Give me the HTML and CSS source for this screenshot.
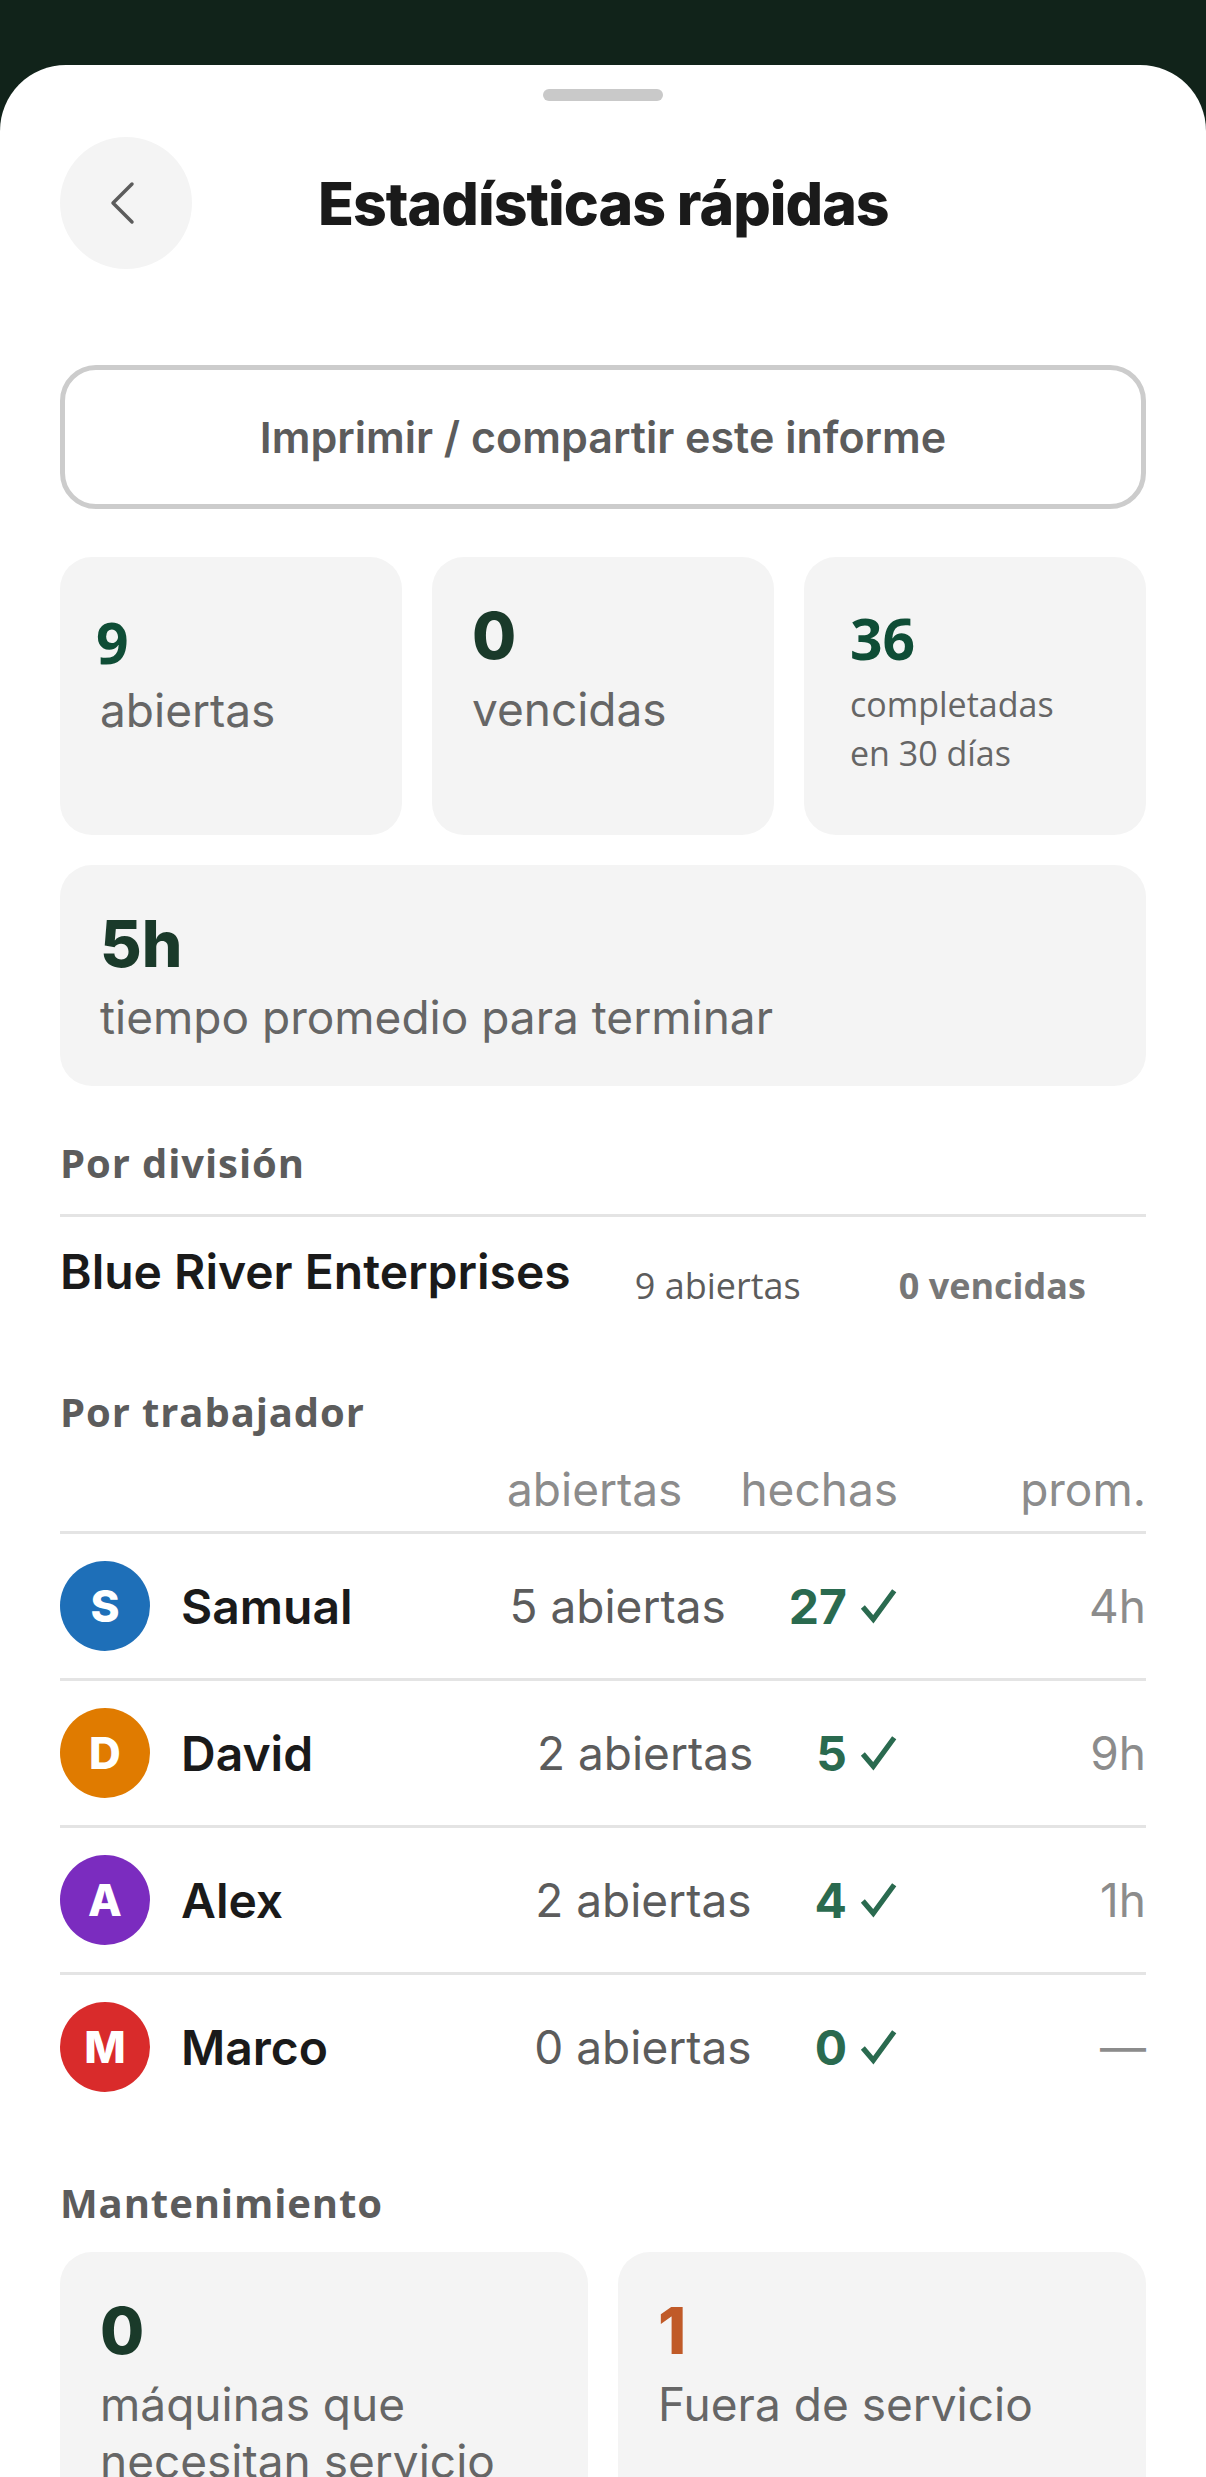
FILE: index.html
```html
<!DOCTYPE html>
<html>
<head>
    <title>Estadísticas rápidas</title>
    <link rel="stylesheet" href="styles.css">
</head>
<body>
    <div class="sheet">
        <div class="handle"></div>
        <div class="header">
            <button class="back" aria-label="Volver">
                <svg width="32" height="48" viewBox="0 0 32 48"><path d="M24 5 L5 24 L24 43" fill="none" stroke="#5c5c5c" stroke-width="3.5" stroke-linecap="round" stroke-linejoin="round"/></svg>
            </button>
            <h1>Estadísticas rápidas</h1>
        </div>

        <button class="print">Imprimir / compartir este informe</button>

        <div class="stats">
            <div class="card open-card">
                <div class="num-alt">9</div>
                <div class="label">abiertas</div>
            </div>
            <div class="card">
                <div class="num">0</div>
                <div class="label">vencidas</div>
            </div>
            <div class="card third">
                <div class="num-alt">36</div>
                <div class="label-small">completadas<br>en 30 días</div>
            </div>
        </div>

        <div class="card wide">
            <div class="num">5h</div>
            <div class="label">tiempo promedio para terminar</div>
        </div>

        <h2 class="section first">Por división</h2>
        <div class="division">
            <span class="division-name">Blue River Enterprises</span>
            <span class="division-open">9 abiertas</span>
            <span class="division-late">0 vencidas</span>
        </div>

        <h2 class="section workers-title">Por trabajador</h2>
        <div class="worker-head">
            <span class="head-open">abiertas</span>
            <span class="head-done">hechas</span>
            <span class="prom">prom.</span>
        </div>

        <div class="worker">
            <span class="avatar blue">S</span>
            <span class="name">Samual</span>
            <span class="open">5 abiertas</span>
            <span class="done">27 <svg viewBox="0 0 40 40"><path d="M3 21 L14 34 L36 4" fill="none" stroke="currentColor" stroke-width="5.5"/></svg></span>
            <span class="prom">4h</span>
        </div>
        <div class="worker">
            <span class="avatar orange">D</span>
            <span class="name">David</span>
            <span class="open">2 abiertas</span>
            <span class="done">5 <svg viewBox="0 0 40 40"><path d="M3 21 L14 34 L36 4" fill="none" stroke="currentColor" stroke-width="5.5"/></svg></span>
            <span class="prom">9h</span>
        </div>
        <div class="worker">
            <span class="avatar purple">A</span>
            <span class="name">Alex</span>
            <span class="open">2 abiertas</span>
            <span class="done">4 <svg viewBox="0 0 40 40"><path d="M3 21 L14 34 L36 4" fill="none" stroke="currentColor" stroke-width="5.5"/></svg></span>
            <span class="prom">1h</span>
        </div>
        <div class="worker last">
            <span class="avatar red">M</span>
            <span class="name">Marco</span>
            <span class="open">0 abiertas</span>
            <span class="done">0 <svg viewBox="0 0 40 40"><path d="M3 21 L14 34 L36 4" fill="none" stroke="currentColor" stroke-width="5.5"/></svg></span>
            <span class="prom">—</span>
        </div>

        <h2 class="section maint-title">Mantenimiento</h2>
        <div class="maint">
            <div class="card maint-card">
                <div class="num">0</div>
                <div class="label">máquinas que necesitan servicio</div>
            </div>
            <div class="card maint-card">
                <div class="num rust">1</div>
                <div class="label">Fuera de servicio</div>
            </div>
        </div>
    </div>
</body>
</html>
```

FILE: styles.css
```css
:root {
    --ink: #1a1a1a;
    --gray: #5c5c5c;
    --light: #8c8c8c;
    --card: #f4f4f4;
    --line: #e4e4e4;
    --green: #1a3a2a;
    --green-alt: #0f4d36;
    --done: #2a6a4f;
}

html, body {
    margin: 0;
    height: 2477px;
    overflow: hidden;
}

body {
    background: #11231a;
    font-family: 'Inter', sans-serif;
    color: var(--gray);
}

.sheet {
    margin-top: 65px;
    height: 2412px;
    padding: 0 60px;
    box-sizing: border-box;
    background: white;
    border-radius: 66px 66px 0 0;
    overflow: hidden;
}

.handle {
    width: 120px;
    height: 12px;
    margin: 0 auto;
    position: relative;
    top: 24px;
    background: #c9c9c9;
    border-radius: 6px;
}

.header {
    display: flex;
    align-items: center;
    height: 132px;
    margin-top: 60px;
}

.back {
    width: 132px;
    height: 132px;
    flex: none;
    padding: 0 4px 0 0;
    border: none;
    border-radius: 50%;
    background: var(--card);
    display: flex;
    align-items: center;
    justify-content: center;
}

h1 {
    margin: 0 0 0 126px;
    font-size: 59px;
    font-weight: 800;
    letter-spacing: -1px;
    color: var(--ink);
}

.print {
    display: block;
    width: 100%;
    height: 144px;
    margin-top: 96px;
    border: 5px solid #cccccc;
    border-radius: 36px;
    background: white;
    font-family: 'Inter', sans-serif;
    font-size: 43px;
    font-weight: 600;
    color: var(--gray);
}

.stats {
    display: grid;
    grid-template-columns: repeat(3, 1fr);
    gap: 30px;
    margin-top: 48px;
    height: 278px;
}

.card {
    background: var(--card);
    border-radius: 32px;
    box-sizing: border-box;
    padding: 40px;
}

.open-card {
    padding-top: 47px;
}

.open-card .num-alt {
    margin-left: -4px;
}

.third {
    padding: 43px 0 0 46px;
}

.num {
    font-size: 64px;
    font-weight: 800;
    line-height: 78px;
    margin-bottom: 6px;
    color: var(--green);
}

.num-alt {
    font-family: 'Open Sans', sans-serif;
    font-size: 57px;
    font-weight: 700;
    line-height: 76px;
    margin-bottom: 2px;
    color: var(--green-alt);
}

.third .num-alt {
    margin-bottom: 4px;
}

.label {
    font-size: 46px;
    line-height: 57px;
    color: #666666;
}

.label-small {
    font-family: 'Open Sans', sans-serif;
    font-size: 34px;
    line-height: 49px;
    color: #666666;
}

.wide {
    margin-top: 30px;
    height: 221px;
}

.section {
    margin: 0;
    font-family: 'Open Sans', sans-serif;
    font-size: 40px;
    font-weight: 700;
    letter-spacing: 0.9px;
    line-height: 52px;
    color: var(--gray);
}

.section.first {
    margin-top: 51px;
}

.division {
    display: flex;
    align-items: flex-start;
    height: 112px;
    margin-top: 25px;
    padding-top: 25px;
    box-sizing: border-box;
    border-top: 3px solid var(--line);
}

.division-name {
    font-size: 48px;
    font-weight: 600;
    color: var(--ink);
}

.division-open {
    font-family: 'Open Sans', sans-serif;
    font-size: 36px;
    margin: 19px 0 0 64px;
}

.division-late {
    font-family: 'Open Sans', sans-serif;
    font-size: 36px;
    font-weight: 700;
    color: #777777;
    margin: 19px 0 0 98px;
}

.workers-title {
    margin-top: 60px;
}

.worker-head {
    display: flex;
    align-items: baseline;
    justify-content: flex-end;
    margin-top: 24px;
    padding-bottom: 14px;
    font-size: 46px;
    line-height: 55px;
    color: var(--light);
    border-bottom: 3px solid var(--line);
}

.head-open {
    margin-right: 58px;
}

.prom {
    width: 248px;
    text-align: right;
    color: var(--light);
}

.worker {
    display: flex;
    align-items: center;
    height: 147px;
    box-sizing: border-box;
    font-size: 46px;
    border-bottom: 3px solid var(--line);
}

.worker.last {
    border-bottom-color: transparent;
}

.avatar {
    width: 90px;
    height: 90px;
    flex: none;
    border-radius: 50%;
    display: flex;
    align-items: center;
    justify-content: center;
    color: white;
    font-size: 44px;
    font-weight: 800;
}

.blue { background: #1e6fb8; }
.orange { background: #e07b00; }
.purple { background: #7b2cbf; }
.red { background: #d92b2b; }

.name {
    flex: 1;
    margin-left: 31px;
    font-size: 48px;
    font-weight: 600;
    color: var(--ink);
}

.open {
    margin-right: 63px;
}

.done {
    display: flex;
    align-items: center;
    gap: 13px;
    font-size: 48px;
    font-weight: 700;
    color: var(--done);
}

.done svg {
    width: 38px;
    height: 38px;
}

.maint-title {
    margin-top: 55px;
}

.maint {
    display: grid;
    grid-template-columns: 1fr 1fr;
    gap: 30px;
    margin-top: 23px;
}

.maint-card {
    height: 320px;
}

.rust {
    color: #c05a28;
}
```
